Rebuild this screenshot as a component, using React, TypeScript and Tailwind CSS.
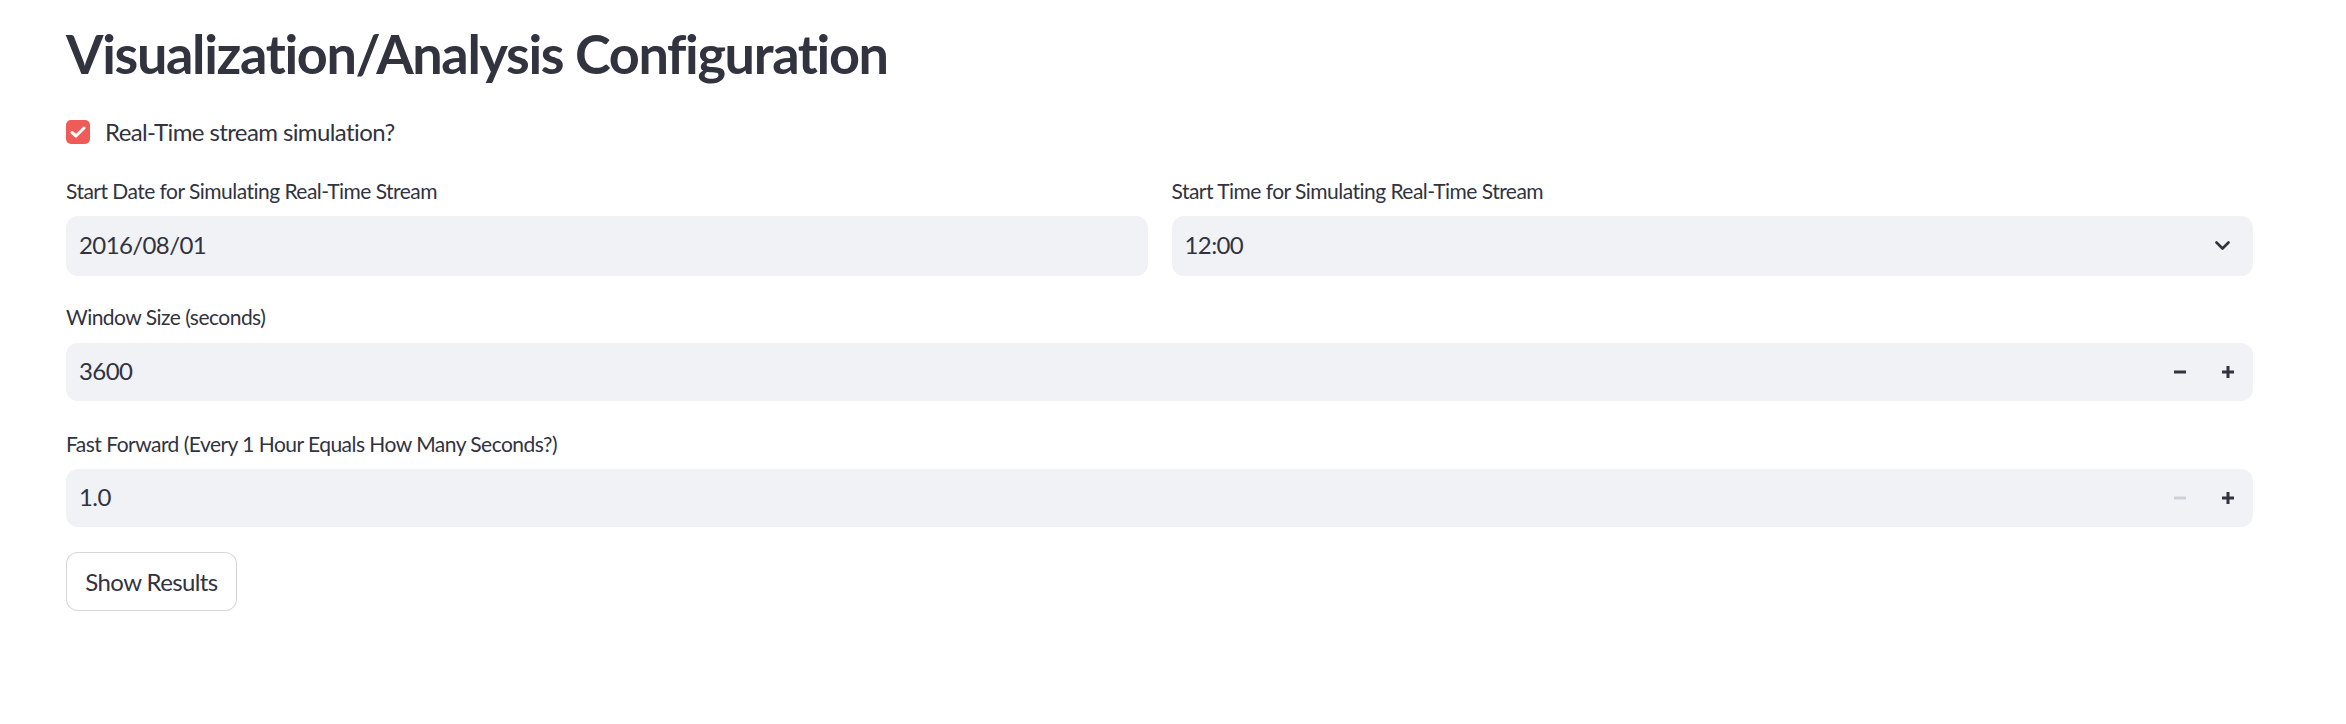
import React from "react";

const font = { fontFamily: '"Lato", "Noto Sans", sans-serif' };

function Label({ children, mb }: { children: React.ReactNode; mb: string }) {
  return (
    <div className={`text-[21px] leading-[30px] text-[#31333F] tracking-tight ${mb}`}>{children}</div>
  );
}

function Minus({ color }: { color: string }) {
  return (
    <svg width="12" height="12" viewBox="0 0 12 12">
      <rect x="0" y="4.5" width="12" height="3" fill={color} />
    </svg>
  );
}

function Plus() {
  return (
    <svg width="12" height="12" viewBox="0 0 12 12">
      <rect x="0" y="4.5" width="12" height="3" fill="#31333F" />
      <rect x="4.5" y="0" width="3" height="12" fill="#31333F" />
    </svg>
  );
}

function NumberInput({ value, minusDisabled }: { value: string; minusDisabled?: boolean }) {
  return (
    <div className="h-[58px] w-full rounded-[12px] bg-[#F0F2F6] flex items-center">
      <div className="flex-1 pl-[13px] text-[24px] leading-[36px] tracking-tight text-[#31333F] -mt-[2px]">{value}</div>
      <div className="w-[48px] h-full flex items-center justify-center">
        <Minus color={minusDisabled ? "#CDD0D6" : "#31333F"} />
      </div>
      <div className="w-[48px] h-full flex items-center justify-center mr-[1px]">
        <Plus />
      </div>
    </div>
  );
}

export default function App() {
  return (
    <div className="min-h-[724px] bg-white pl-[66px] pr-[93px] pt-[22px]" style={font}>
      <h1 className="text-[54px] leading-[64px] font-bold text-[#31333F] tracking-tight">
        Visualization/Analysis Configuration
      </h1>

      <div className="mt-[28px] h-[36px] flex items-center gap-[15px]">
        <div className="w-[24px] h-[24px] rounded-[5px] bg-[#EF5B57] flex items-center justify-center">
          <svg width="16" height="12" viewBox="0 0 16 12">
            <polyline points="2,6.5 6,10 14,2" fill="none" stroke="#ffffff" strokeWidth="3" strokeLinecap="round" strokeLinejoin="round" />
          </svg>
        </div>
        <span className="text-[24px] leading-[36px] text-[#31333F] tracking-tight">Real-Time stream simulation?</span>
      </div>

      <div className="mt-[26px] grid grid-cols-2 gap-[24px]">
        <div>
          <Label mb="mb-[10px]">Start Date for Simulating Real-Time Stream</Label>
          <div className="h-[60px] rounded-[12px] bg-[#F0F2F6] flex items-center pl-[13px]">
            <span className="text-[24px] leading-[36px] tracking-tight text-[#31333F] -mt-[2px]">2016/08/01</span>
          </div>
        </div>
        <div>
          <Label mb="mb-[10px]">Start Time for Simulating Real-Time Stream</Label>
          <div className="h-[60px] rounded-[12px] bg-[#F0F2F6] flex items-center pl-[13px] pr-[23px]">
            <span className="flex-1 text-[24px] leading-[36px] tracking-tight text-[#31333F] -mt-[2px]">12:00</span>
            <svg width="15" height="10" viewBox="0 0 15 10">
              <polyline points="1.5,1.5 7.5,7.5 13.5,1.5" fill="none" stroke="#31333F" strokeWidth="2.6" strokeLinecap="round" strokeLinejoin="round" />
            </svg>
          </div>
        </div>
      </div>

      <div className="mt-[26px]">
        <Label mb="mb-[11px]">Window Size (seconds)</Label>
        <NumberInput value="3600" />
      </div>

      <div className="mt-[28px]">
        <Label mb="mb-[10px]">Fast Forward (Every 1 Hour Equals How Many Seconds?)</Label>
        <NumberInput value="1.0" minusDisabled />
      </div>

      <button className="mt-[25px] h-[59px] w-[171px] rounded-[12px] border border-[rgba(49,51,63,0.2)] bg-white flex items-center justify-center text-[24px] leading-[36px] tracking-tight text-[#31333F]">
        Show Results
      </button>
    </div>
  );
}
